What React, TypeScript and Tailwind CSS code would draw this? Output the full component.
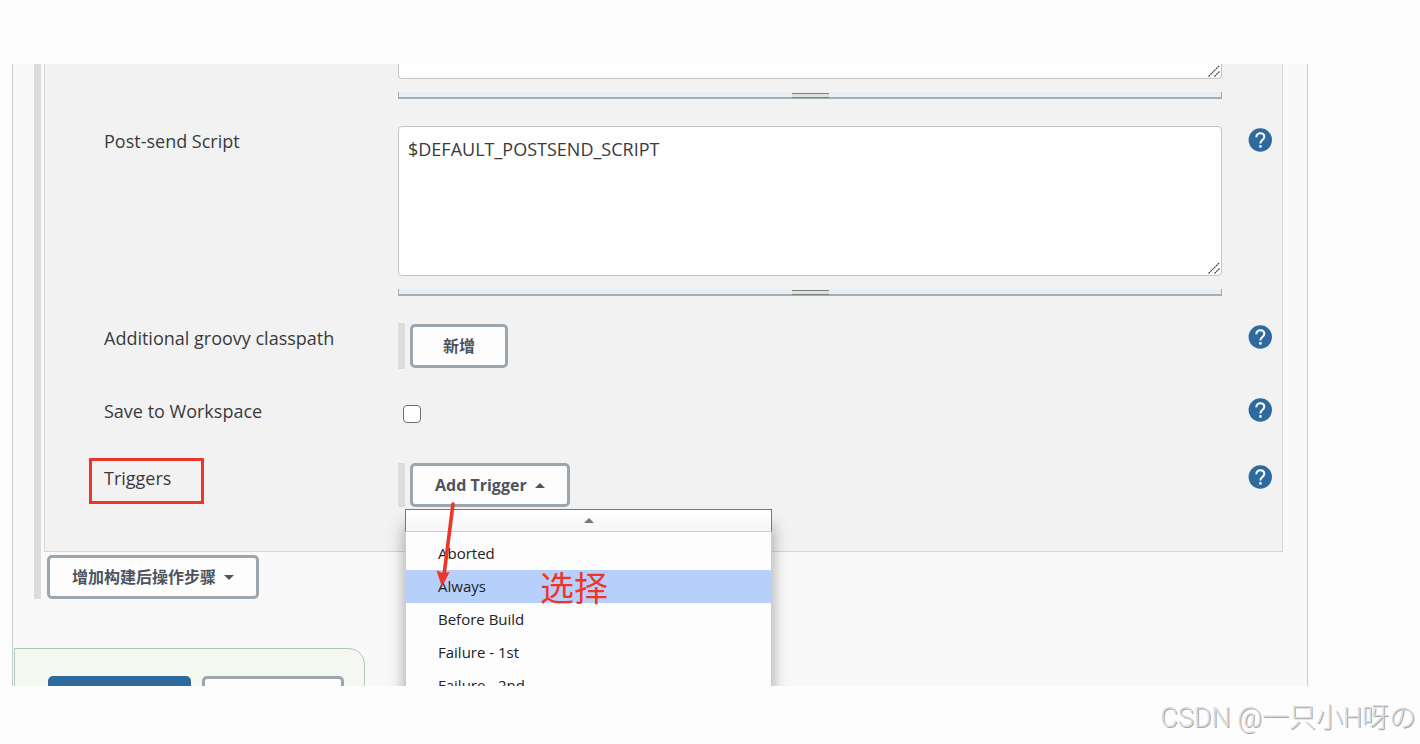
import { ReactNode, useState } from 'react';
import { clsx } from 'clsx';

const triggers = ['Aborted', 'Always', 'Before Build', 'Failure - 1st', 'Failure - 2nd'];

function HelpButton({ topic }: { topic: string }) {
  return (
    <button type="button" aria-label={`Help for feature: ${topic}`} className="mt-0.5 h-6 w-6 shrink-0">
      <svg viewBox="0 0 24 24" className="h-6 w-6">
        <circle cx="12.3" cy="12" r="11.7" fill="#2f6a9f" />
        <path
          d="M8.3 9.2C8.3 6.9 9.8 5.2 12.3 5.2s4 1.5 4 3.6c0 1.5-.8 2.3-2 3.2-1.3 1-1.9 1.6-1.9 3.4"
          fill="none"
          stroke="#fff"
          strokeWidth="2"
        />
        <rect x="11.2" y="17.2" width="2.4" height="2.4" fill="#fff" />
      </svg>
    </button>
  );
}

interface RowProps {
  id?: string;
  label?: string;
  marked?: boolean;
  children: ReactNode;
}

function Row({ id, label, marked, children }: RowProps) {
  return (
    <div className="flex items-start">
      <div className="w-[294px] shrink-0 pt-[3px]">
        {label && (
          <label htmlFor={id} className="relative inline-block text-lg leading-6">
            {label}
            {marked && (
              <span className="absolute -top-2 -left-[15px] h-[46px] w-[115px] border-[3px] border-[#ee3528]" />
            )}
          </label>
        )}
      </div>
      <div className="min-w-0 flex-1">{children}</div>
      <div className="flex w-[60px] shrink-0 justify-end pr-[10px]">{label && <HelpButton topic={label} />}</div>
    </div>
  );
}

function ScriptArea({ id, value, cut }: { id?: string; value?: string; cut?: boolean }) {
  return (
    <>
      <div className="relative">
        <textarea
          id={id}
          aria-label={id ? undefined : 'Pre-send Script'}
          defaultValue={value}
          className={clsx(
            'block w-full resize-none border border-[#c3c5c6] bg-[#fefefe] px-[9px] text-lg leading-6 outline-none',
            cut ? 'h-[15px] overflow-hidden rounded-b border-t-0' : 'h-[150px] rounded py-[10px]'
          )}
        />
        <svg viewBox="0 0 12 12" className="pointer-events-none absolute right-[2px] bottom-[2px] h-3 w-3">
          <path d="M0.5 11.5L11.5 0.5M6.5 11.5L11.5 6.5" stroke="#444" strokeWidth="1.2" strokeDasharray="2 0.6" />
        </svg>
      </div>
      {/* resize grip */}
      <div className="mt-[13px] flex h-[7px] justify-center border-x border-b-2 border-[#a3aeb6] bg-[#e9eef2]">
        <span className="mt-px h-[5px] w-[37px] border-y border-[#7d847e] bg-[#dfe1dd]" />
      </div>
    </>
  );
}

function Caret({ up }: { up?: boolean }) {
  return (
    <svg viewBox="0 0 10 5" className="h-[5px] w-[10px] fill-current">
      <path d={up ? 'M0 5L5 0L10 5Z' : 'M0 0L5 5L10 0Z'} />
    </svg>
  );
}

function OutlineButton({ id, children }: { id?: string; children: ReactNode }) {
  return (
    <button
      id={id}
      type="button"
      className="flex h-11 items-center gap-2 rounded-[5px] border-[3px] border-[#9ba6af] bg-[#fdfdfd] px-[22px] text-base font-bold text-[#4d545d]"
    >
      {children}
    </button>
  );
}

function TriggerMenu() {
  const [active, setActive] = useState('Always');

  return (
    <div className="absolute top-[46px] left-0 z-10 w-[367px] bg-[#fdfdfd] text-[15px] text-[#222] shadow-[0_16px_16px_rgba(0,0,0,0.35)]">
      <button
        type="button"
        aria-label="Scroll up"
        className="flex h-[23px] w-full items-center justify-center border border-[#777] border-b-[#ccc] bg-linear-to-b from-white to-[#f6f6f6] text-[#777]"
      >
        <Caret up />
      </button>
      <ul className="border-x border-[#ccc] pt-[5px]">
        {triggers.map((name) => (
          <li key={name}>
            <button
              type="button"
              onMouseEnter={() => setActive(name)}
              className={clsx('relative block h-[33px] w-full pl-8 text-left', name === active && 'bg-[#b7d0fb]')}
            >
              {name}
              {name === 'Always' && (
                <span className="absolute -top-1 left-[134px] text-[34px] leading-[44px] text-[#ee3528]">选择</span>
              )}
            </button>
          </li>
        ))}
      </ul>
    </div>
  );
}

export default function App() {
  return (
    <div
      className="flex h-screen flex-col bg-[#fdfdfd] pt-16 text-[#3a3a3d]"
      style={{ fontFamily: '"Open Sans", "Noto Sans CJK SC", sans-serif' }}
    >
      <main className="mr-28 ml-3 min-h-0 flex-1 overflow-hidden border-x border-[#c9c9c9] bg-[#f9f9f9]">
        <div className="mr-6 ml-[21px] border-l-[7px] border-[#dcdcdc] pl-[3px]">
          <section className="flex flex-col gap-[27px] border-x border-b border-[#d5d5d5] bg-[#f2f2f2] pb-11 pl-[59px]">
            <Row>
              <ScriptArea cut />
            </Row>
            <Row id="post-send" label="Post-send Script">
              <ScriptArea id="post-send" value="$DEFAULT_POSTSEND_SCRIPT" />
            </Row>
            <Row id="classpath" label="Additional groovy classpath">
              <div className="border-l-[7px] border-[#dcdcdc] py-px pl-[5px]">
                <button
                  id="classpath"
                  type="button"
                  className="h-11 rounded-[5px] border-[3px] border-[#9ba6af] bg-[#fdfdfd] px-[30px] text-base font-bold text-[#4d545d]"
                >
                  新增
                </button>
              </div>
            </Row>
            <Row id="save" label="Save to Workspace">
              <div className="h-10 pt-[9px] pl-[5px]">
                <input
                  id="save"
                  type="checkbox"
                  className="block h-[18px] w-[18px] appearance-none rounded border border-[#6f6f6f] bg-white checked:bg-[#2f6a9f]"
                />
              </div>
            </Row>
            <Row id="triggers" label="Triggers" marked>
              <div className="relative border-l-[7px] border-[#dcdcdc] pl-[5px]">
                <OutlineButton id="triggers">
                  Add Trigger <Caret up />
                </OutlineButton>
                <TriggerMenu />
                <svg viewBox="0 0 20 90" className="pointer-events-none absolute top-[38px] left-[30px] z-20 h-[90px] w-5">
                  <path d="M18 3L9 74" stroke="#ee3528" strokeWidth="3.6" strokeLinecap="round" />
                  <path d="M1.5 69.5L8 72L14.5 71L7 86Z" fill="#ee3528" />
                </svg>
              </div>
            </Row>
          </section>
          <div className="pt-[3px] pl-[3px]">
            <OutlineButton>
              增加构建后操作步骤 <Caret />
            </OutlineButton>
          </div>
        </div>

        <div className="mt-[49px] ml-px flex w-[351px] gap-[11px] rounded-tr-2xl border border-[#a9cbb8] bg-[#f4f8f1] pt-[27px] pr-5 pb-8 pl-[33px]">
          <button type="button" aria-label="保存" className="h-11 w-[143px] shrink-0 rounded-[5px] bg-[#2f6a9f]" />
          <button type="button" aria-label="应用" className="h-11 flex-1 rounded-[5px] border-[3px] border-[#9ba6af] bg-[#fdfdfd]" />
        </div>
      </main>
      <footer
        className="flex h-[58px] shrink-0 items-center justify-end pt-1.5 pr-1 text-[27px] font-light text-[#dcdcdc] [text-shadow:1px_1px_0_#a8a8a8]"
        style={{ fontFamily: 'Roboto, "Noto Sans CJK SC", sans-serif' }}
      >
        CSDN @一只小H呀の
      </footer>
    </div>
  );
}
